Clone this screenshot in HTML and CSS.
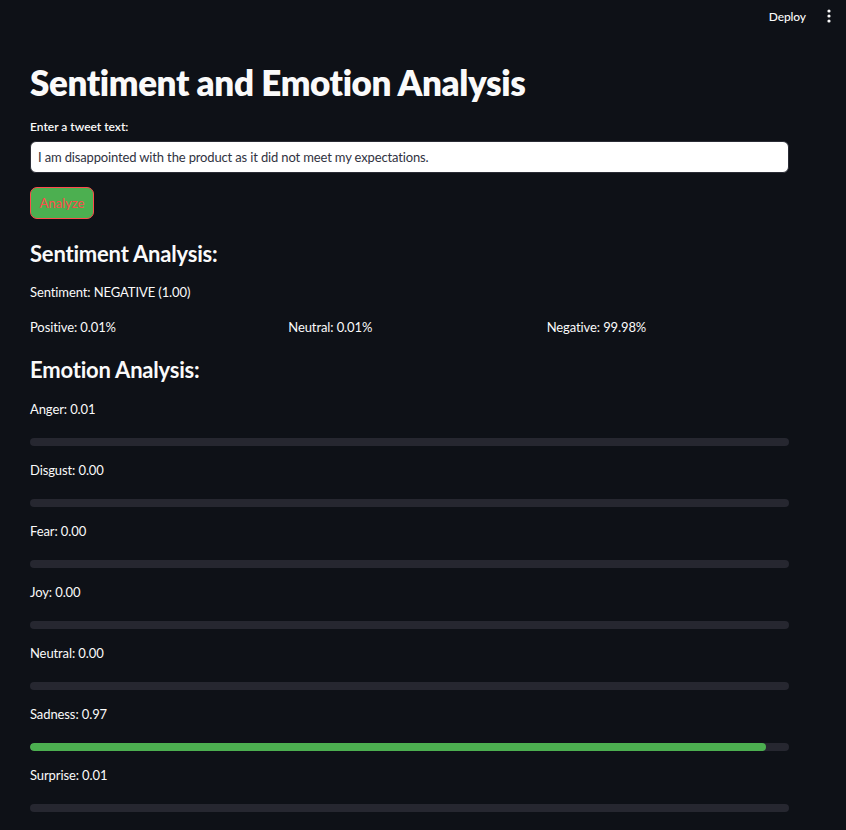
FILE: index.html
```html
<!DOCTYPE html>
<html lang="en">
<head>
<meta charset="utf-8">
<title>Sentiment and Emotion Analysis</title>
<link rel="stylesheet" href="styles.css">
</head>
<body>
<header class="topbar">
  <span class="deploy">Deploy</span>
  <svg class="menu" width="4" height="14" viewBox="0 0 4 14"><circle cx="2" cy="2" r="1.6" fill="#fafafa"/><circle cx="2" cy="7" r="1.6" fill="#fafafa"/><circle cx="2" cy="12" r="1.6" fill="#fafafa"/></svg>
</header>
<main class="main">
  <h1 class="title">Sentiment and Emotion Analysis</h1>
  <label class="label" for="tweet">Enter a tweet text:</label>
  <input class="input" id="tweet" type="text" value="I am disappointed with the product as it did not meet my expectations.">
  <button class="btn">Analyze</button>

  <h3 class="h3 h3-first">Sentiment Analysis:</h3>
  <p class="text sentiment">Sentiment: NEGATIVE (1.00)</p>
  <div class="cols">
    <p class="text">Positive: 0.01%</p>
    <p class="text">Neutral: 0.01%</p>
    <p class="text">Negative: 99.98%</p>
  </div>

  <h3 class="h3 h3-second">Emotion Analysis:</h3>
  <div class="emotions">
    <div class="emo"><p class="text">Anger: 0.01</p><div class="track"><div class="fill" style="width:0%"></div></div></div>
    <div class="emo"><p class="text">Disgust: 0.00</p><div class="track"><div class="fill" style="width:0%"></div></div></div>
    <div class="emo"><p class="text">Fear: 0.00</p><div class="track"><div class="fill" style="width:0%"></div></div></div>
    <div class="emo"><p class="text">Joy: 0.00</p><div class="track"><div class="fill" style="width:0%"></div></div></div>
    <div class="emo"><p class="text">Neutral: 0.00</p><div class="track"><div class="fill" style="width:0%"></div></div></div>
    <div class="emo"><p class="text">Sadness: 0.97</p><div class="track"><div class="fill" style="width:97%"></div></div></div>
    <div class="emo"><p class="text">Surprise: 0.01</p><div class="track"><div class="fill" style="width:0%"></div></div></div>
  </div>
</main>
</body>
</html>
```

FILE: styles.css
```css
* { box-sizing: border-box; }
html, body { margin: 0; padding: 0; }
body {
  background: #0e1117;
  color: #fafafa;
  font-family: "Source Sans Pro", Lato, "Noto Sans", sans-serif;
  width: 846px;
  height: 830px;
  overflow: hidden;
}
.topbar {
  height: 32px;
  display: flex;
  align-items: center;
  justify-content: flex-end;
  padding-right: 15px;
  gap: 21px;
}
.deploy { font-size: 12px; font-weight: 500; color: #fafafa; letter-spacing: -0.1px; }
.menu { display: block; }
.main {
  width: 759px;
  margin-left: 30px;
  display: flex;
  flex-direction: column;
  align-items: flex-start;
}
.title {
  margin: 28px 0 0;
  font-size: 35px;
  line-height: 44px;
  font-weight: 800;
  letter-spacing: -0.4px;
}
.label {
  margin-top: 13px;
  font-size: 12px;
  line-height: 20px;
  font-weight: 600;
}
.input {
  margin-top: 4px;
  width: 759px;
  height: 32px;
  border: 1px solid #2a2c35;
  border-radius: 6px;
  background: #ffffff;
  color: #31333f;
  font-family: inherit;
  font-size: 13px;
  letter-spacing: -0.15px;
  padding: 0 7px;
  outline: none;
}
.btn {
  margin-top: 14px;
  width: 64px;
  height: 32px;
  background: #4caf50;
  border: 1px solid #ff4b4b;
  border-radius: 7px;
  color: #ff4b4b;
  font-family: inherit;
  font-size: 13px;
  padding: 0;
}
.h3 {
  margin: 0;
  font-size: 22px;
  line-height: 32px;
  font-weight: 700;
  letter-spacing: -0.2px;
}
.h3-first { margin-top: 19px; }
.h3-second { margin-top: 15px; }
.text {
  margin: 0;
  font-size: 13px;
  line-height: 24px;
  letter-spacing: -0.1px;
}
.sentiment { margin-top: 10px; }
.cols {
  margin-top: 11px;
  width: 100%;
  display: grid;
  grid-template-columns: repeat(3, 1fr);
  gap: 16px;
}
.emotions {
  margin-top: 11px;
  width: 100%;
  display: flex;
  flex-direction: column;
  gap: 12px;
}
.track {
  margin-top: 17px;
  height: 8px;
  border-radius: 4px;
  background: #262730;
  overflow: hidden;
}
.fill {
  height: 100%;
  background: #4caf50;
  border-radius: 4px;
}
```
